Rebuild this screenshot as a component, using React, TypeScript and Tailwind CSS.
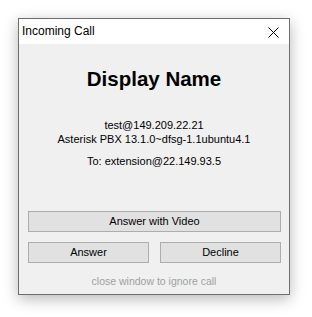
export default function App() {
  return (
    <div className="w-[312px] h-[317px] bg-white pt-[18px] pl-[18px] font-['Liberation_Sans',Arial,sans-serif]">
      <div className="w-[272px] h-[277px] border border-[#6e6e6e] bg-[#f0f0f0] shadow-[0_4px_14px_rgba(0,0,0,0.28)] flex flex-col">
        {/* title bar */}
        <div className="h-[25px] bg-white flex items-center justify-between pl-[3px] pr-[10px] shrink-0">
          <span className="text-[12px] leading-[25px] text-black">Incoming Call</span>
          <svg width="11" height="11" viewBox="0 0 11 11" className="mt-[1px]">
            <path d="M0.5 0.5 L10.5 10.5 M10.5 0.5 L0.5 10.5" stroke="#000" strokeWidth="1" fill="none" />
          </svg>
        </div>

        <div className="flex flex-col items-center text-black">
          <h1 className="mt-[23px] text-[20.5px] leading-[24px] font-bold">Display Name</h1>
          <div className="mt-[27px] text-[11px] leading-[14px] text-center">
            <div>test@149.209.22.21</div>
            <div>Asterisk PBX 13.1.0~dfsg-1.1ubuntu4.1</div>
            <div className="mt-[8px]">To: extension@22.149.93.5</div>
          </div>
        </div>

        <div className="mt-[43px] ml-[9px] w-[253px] flex flex-col gap-[10px]">
          <button className="h-[21px] w-full border border-[#adadad] bg-[#e1e1e1] text-[11px] text-black leading-none">
            Answer with Video
          </button>
          <div className="flex gap-[11px]">
            <button className="h-[21px] w-[121px] border border-[#adadad] bg-[#e1e1e1] text-[11px] text-black leading-none">
              Answer
            </button>
            <button className="h-[21px] w-[121px] border border-[#adadad] bg-[#e1e1e1] text-[11px] text-black leading-none">
              Decline
            </button>
          </div>
        </div>

        <p className="mt-[12px] text-center text-[10.5px] leading-[13px] text-[#a0a0a0]">close window to ignore call</p>
      </div>
    </div>
  )
}
